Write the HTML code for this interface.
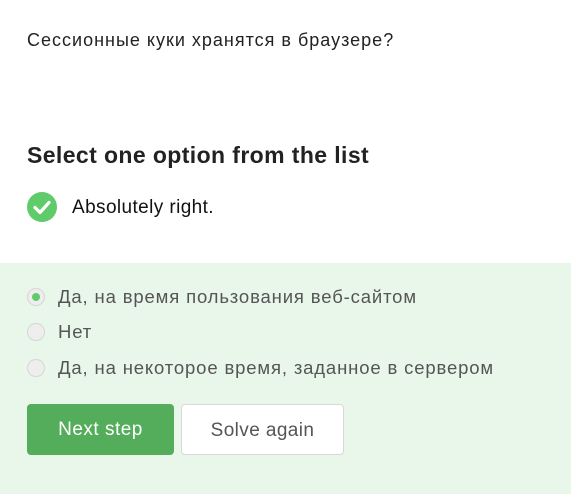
<!DOCTYPE html>
<html><head><meta charset="utf-8"><style>
body{margin:0;width:571px;height:494px;background:#fff;font-family:"Liberation Sans",sans-serif;position:relative;overflow:hidden}
.a{position:absolute;white-space:nowrap}
.g{position:absolute;left:0;top:263px;width:571px;height:231px;background:#e8f7ea}
.r{position:absolute;left:27px;width:18px;height:18px;border-radius:50%;background:#eee;border:1px solid #d6d6d6;box-sizing:border-box}
.btn{position:absolute;top:404px;height:51px;border-radius:4px;font-size:19px;line-height:51px;text-align:center;box-sizing:border-box}
.o{font-size:18.5px;letter-spacing:0.85px;color:#555}
</style></head><body>
<div class="a" style="left:27px;top:30px;font-size:18px;letter-spacing:1px;color:#222">Сессионные куки хранятся в браузере?</div>
<div class="a" style="left:27px;top:142px;font-size:23px;letter-spacing:0.4px;font-weight:bold;color:#222">Select one option from the list</div>
<svg class="a" style="left:27px;top:192px" width="30" height="30" viewBox="0 0 30 30"><circle cx="15" cy="15" r="15" fill="#5fcb6b"/><path d="M8 15.5l5 5 9-10" stroke="#fff" stroke-width="3.2" fill="none" stroke-linecap="round" stroke-linejoin="round"/></svg>
<div class="a" style="left:72px;top:197px;font-size:19px;letter-spacing:0.4px;color:#111">Absolutely right.</div>
<div class="g"></div>
<div class="r" style="top:288px"><div style="position:absolute;left:4px;top:4px;width:8px;height:8px;border-radius:50%;background:#5fcb6b"></div></div>
<div class="r" style="top:323px"></div>
<div class="r" style="top:359px"></div>
<div class="a o" style="left:58px;top:286px">Да, на время пользования веб-сайтом</div>
<div class="a o" style="left:58px;top:321px">Нет</div>
<div class="a o" style="left:58px;top:357px">Да, на некоторое время, заданное в сервером</div>
<div class="btn" style="left:27px;width:147px;background:#54ad5a;color:#fff;letter-spacing:0.5px">Next step</div>
<div class="btn" style="left:181px;width:163px;background:#fff;border:1px solid #d8d8d8;color:#555;letter-spacing:0.4px">Solve again</div>
</body></html>
